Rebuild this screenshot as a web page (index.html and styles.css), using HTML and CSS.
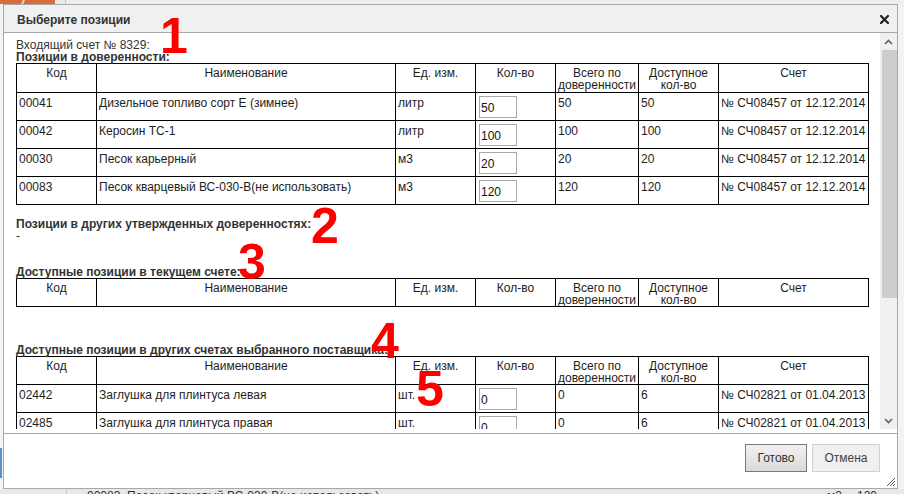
FILE: index.html
```html
<!DOCTYPE html>
<html lang="ru">
<head>
<meta charset="utf-8">
<title>Выберите позиции</title>
<link rel="stylesheet" href="styles.css">
</head>
<body>
<div class="page">
  <div class="topstrip">
    <div class="orange"><i class="slash"></i></div>
    <div class="tabgap"></div>
    <div class="tabrest"></div>
  </div>
  <div class="midrow">
    <div class="leftstrip"><div class="blue"></div></div>
    <div class="dialog">
      <div class="titlebar">
        <span class="title">Выберите позиции</span>
        <svg class="close" width="9" height="9" viewBox="0 0 9 9"><path d="M1 1 L8 8 M8 1 L1 8" stroke="#222" stroke-width="2.2" stroke-linecap="square"/></svg>
      </div>
      <div class="bodyarea">
        <div class="scroll">
          <div class="content">
            <div class="line">Входящий счет № 8329:</div>
            <div class="line head">Позиции в доверенности:</div>
            <table class="grid">
              <colgroup><col class="c1"><col class="c2"><col class="c3"><col class="c4"><col class="c5"><col class="c6"><col class="c7"></colgroup>
              <tr class="hrow"><th>Код</th><th>Наименование</th><th>Ед. изм.</th><th>Кол-во</th><th>Всего по доверенности</th><th>Доступное кол-во</th><th>Счет</th></tr>
              <tr class="drow"><td>00041</td><td>Дизельное топливо сорт Е (зимнее)</td><td>литр</td><td><input class="qty" value="50"></td><td>50</td><td>50</td><td>№ СЧ08457 от 12.12.2014</td></tr>
              <tr class="drow"><td>00042</td><td>Керосин ТС-1</td><td>литр</td><td><input class="qty" value="100"></td><td>100</td><td>100</td><td>№ СЧ08457 от 12.12.2014</td></tr>
              <tr class="drow"><td>00030</td><td>Песок карьерный</td><td>м3</td><td><input class="qty" value="20"></td><td>20</td><td>20</td><td>№ СЧ08457 от 12.12.2014</td></tr>
              <tr class="drow"><td>00083</td><td>Песок кварцевый ВС-030-В(не использовать)</td><td>м3</td><td><input class="qty" value="120"></td><td>120</td><td>120</td><td>№ СЧ08457 от 12.12.2014</td></tr>
            </table>
            <div class="line head gap2">Позиции в других утвержденных доверенностях:</div>
            <div class="line">-</div>
            <div class="line head gap3">Доступные позиции в текущем счете:</div>
            <table class="grid">
              <colgroup><col class="c1"><col class="c2"><col class="c3"><col class="c4"><col class="c5"><col class="c6"><col class="c7"></colgroup>
              <tr class="hrow2"><th>Код</th><th>Наименование</th><th>Ед. изм.</th><th>Кол-во</th><th>Всего по доверенности</th><th>Доступное кол-во</th><th>Счет</th></tr>
            </table>
            <div class="line head gap4">Доступные позиции в других счетах выбранного поставщика:</div>
            <table class="grid">
              <colgroup><col class="c1"><col class="c2"><col class="c3"><col class="c4"><col class="c5"><col class="c6"><col class="c7"></colgroup>
              <tr class="hrow2"><th>Код</th><th>Наименование</th><th>Ед. изм.</th><th>Кол-во</th><th>Всего по доверенности</th><th>Доступное кол-во</th><th>Счет</th></tr>
              <tr class="drow"><td>02442</td><td>Заглушка для плинтуса левая</td><td>шт.</td><td><input class="qty" value="0"></td><td>0</td><td>6</td><td>№ СЧ02821 от 01.04.2013</td></tr>
              <tr class="drow"><td>02485</td><td>Заглушка для плинтуса правая</td><td>шт.</td><td><input class="qty" value="0"></td><td>0</td><td>6</td><td>№ СЧ02821 от 01.04.2013</td></tr>
            </table>
          </div>
          <div class="scrollbar">
            <div class="sb-btn"><svg width="9" height="6" viewBox="0 0 9 6"><path d="M1 5 L4.5 1.5 L8 5" fill="none" stroke="#606060" stroke-width="1.6"/></svg></div>
            <div class="sb-thumb"></div>
            <div class="sb-track"></div>
            <div class="sb-btn"><svg width="9" height="6" viewBox="0 0 9 6"><path d="M1 1 L4.5 4.5 L8 1" fill="none" stroke="#606060" stroke-width="1.6"/></svg></div>
          </div>
        </div>
      </div>
      <div class="footer">
        <button class="btn primary">Готово</button>
        <button class="btn">Отмена</button>
        <svg class="grip" width="11" height="11" viewBox="0 0 11 11"><path d="M10 2 L2 10 M10 5 L5 10 M10 8 L8 10" stroke="#555" stroke-width="1"/></svg>
      </div>
    </div>
    <div class="rightstrip"></div>
  </div>
  <div class="bottomstrip">
    <div class="bcell first"></div>
    <div class="bcell name">00083&nbsp; Песок кварцевый ВС-030-В(не использовать)</div>
    <div class="bcell unit">м3</div>
    <div class="bcell num">120</div>
  </div>
  <div class="marks">
    <span class="mark m1">1</span>
    <span class="mark m2">2</span>
    <span class="mark m3">3</span>
    <span class="mark m4">4</span>
    <span class="mark m5">5</span>
  </div>
</div>
</body>
</html>
```

FILE: styles.css
```css
* { box-sizing: border-box; }
html, body { margin: 0; padding: 0; }
body {
  font-family: "Liberation Sans", Arial, sans-serif;
  font-size: 12px;
  color: #222;
  background: #ececec;
  overflow: hidden;
}
.page {
  position: relative;
  width: 904px;
  height: 494px;
  display: flex;
  flex-direction: column;
}

/* background page bits */
.topstrip { height: 4px; display: flex; background: #e6e6e6; }
.orange { width: 55px; background: #d86c3a; position: relative; overflow: hidden; }
.slash { position: absolute; left: 22px; top: -2px; width: 2px; height: 8px; background: #f4d2c2; transform: rotate(25deg); }
.tabgap { width: 11px; background: #e9e9e9; border-right: 1px solid #c8c8c8; }
.tabrest { flex: 1; background: #eeeeee; }

.midrow { display: flex; height: 485px; }
.leftstrip { width: 3px; background: #f4f4f4; display: flex; flex-direction: column; }
.blue { margin-top: 444px; height: 30px; background: #5a8fc8; width: 2px; }
.rightstrip { width: 6px; background: #f3f3f3; }

.dialog {
  width: 895px;
  border: 1px solid #a8a8a8;
  background: #fff;
  display: flex;
  flex-direction: column;
}
.titlebar {
  height: 28px;
  background: #f0f0f0;
  border-bottom: 1px solid #a8a8a8;
  display: flex;
  align-items: center;
  justify-content: space-between;
  padding: 2px 8px 0 13px;
}
.title { font-weight: bold; color: #333; font-size: 12px; }
.close { display: block; }

.bodyarea { height: 401px; border-bottom: 1px solid #a8a8a8; }
.scroll { height: 396px; display: flex; }
.content {
  flex: 1;
  overflow: hidden;
  padding: 6px 0 0 12px;
}
.line { line-height: 12px; height: 12px; white-space: nowrap; color: #333; }
.head { font-weight: bold; }
.gap2 { margin-top: 13px; }
.gap3 { margin-top: 24px; }
.gap4 { margin-top: 37px; }

.grid {
  border-collapse: collapse;
  table-layout: fixed;
  width: 852px;
  line-height: 12px;
}
.c1 { width: 80px; } .c2 { width: 299px; } .c3 { width: 80px; } .c4 { width: 80px; }
.c5 { width: 83px; } .c6 { width: 80px; } .c7 { width: 150px; }
.grid th, .grid td {
  border: 1px solid #000;
  vertical-align: top;
  padding: 4px 1px 0 2px;
  color: #1e1e1e;
  white-space: nowrap;
}
.grid th { font-weight: normal; text-align: center; white-space: normal; padding: 3px 0 0 0; }
.hrow { height: 29px; }
.hrow2 { height: 28px; }
.drow { height: 28px; }
.grid td:nth-child(4) { padding-top: 3px; }
.qty {
  display: block;
  width: 38px;
  height: 22px;
  margin: 0 0 0 1px;
  border: 1px solid #a9a9a9;
  padding: 2px 1px 0 1px;
  font-family: "Liberation Sans", Arial, sans-serif;
  font-size: 12px;
  color: #111;
  background: #fff;
  outline: none;
}

.scrollbar {
  width: 17px;
  background: #f0f0f0;
  display: flex;
  flex-direction: column;
}
.sb-btn { height: 17px; display: flex; align-items: center; justify-content: center; }
.sb-btn svg { display: block; }
.sb-thumb { height: 248px; margin: 0 0 0 2px; background: #cdcdcd; }
.sb-track { flex: 1; }

.footer {
  position: relative;
  flex: 1;
  display: flex;
  justify-content: flex-end;
  align-items: flex-start;
  gap: 5px;
  padding: 10px 17px 0 0;
}
.btn {
  height: 28px;
  font-family: "Liberation Sans", Arial, sans-serif;
  font-size: 12px;
  color: #333;
  padding: 0;
  border: 1px solid #d0d0d0;
  background: #f0f0f0;
  border-radius: 0;
}
.btn.primary {
  width: 62px;
  border-color: #7a7a7a;
  background: linear-gradient(#f2f2f2, #e6e6e6 50%, #d9d9d9);
}
.btn:not(.primary) { width: 68px; color: #444; }
.grip { position: absolute; right: 1px; bottom: 1px; display: block; }

.bottomstrip {
  height: 5px;
  overflow: hidden;
  display: flex;
  background: #e8e8e8;
  line-height: 14px;
  color: #333;
  white-space: nowrap;
}
.bcell { height: 14px; }
.bcell.first { width: 67px; border-right: 1px solid #c8c8c8; }
.bcell.name { width: 760px; padding-left: 20px; }
.bcell.unit { width: 30px; }
.bcell.num { flex: 1; }

.marks { position: absolute; left: 0; top: 0; width: 0; height: 0; }
.mark {
  position: absolute;
  font-family: "Liberation Sans", Arial, sans-serif;
  font-weight: bold;
  font-size: 50px;
  line-height: 50px;
  color: #f00;
}
.m1 { left: 160px; top: 11px; }
.m2 { left: 311px; top: 201px; }
.m3 { left: 238px; top: 237px; }
.m4 { left: 371px; top: 316px; }
.m5 { left: 416px; top: 364px; }
```
